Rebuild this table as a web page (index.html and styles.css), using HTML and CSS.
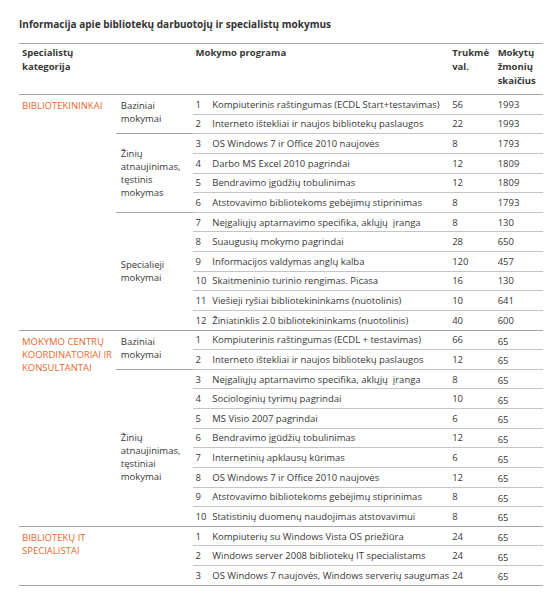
FILE: index.html
```html
<!DOCTYPE html>
<html lang="lt">
<head>
	<meta charset="UTF-8">
	<title>Mokymai</title>
	<link rel="stylesheet" href="styles.css">
</head>
<body>
	<h1 class="title">Informacija apie bibliotekų darbuotojų ir specialistų mokymus</h1>
	<table class="report">
		<colgroup>
			<col class="c-cat">
			<col class="c-type">
			<col class="c-no">
			<col class="c-prog">
			<col class="c-hours">
			<col class="c-people">
		</colgroup>
		<thead>
			<tr>
				<th>Specialistų<br>kategorija</th>
				<th></th>
				<th colspan="2">Mokymo programa</th>
				<th>Trukmė<br>val.</th>
				<th>Mokytų<br>žmonių<br>skaičius</th>
			</tr>
		</thead>
		<tbody class="group">
			<tr>
				<td class="cat" rowspan="12">BIBLIOTEKININKAI</td>
				<td class="type top" rowspan="2">Baziniai<br>mokymai</td>
				<td class="no">1</td><td class="prog">Kompiuterinis raštingumas (ECDL Start+testavimas)</td><td class="num">56</td><td class="num">1993</td>
			</tr>
			<tr>
				<td class="no">2</td><td class="prog">Interneto ištekliai ir naujos bibliotekų paslaugos</td><td class="num">22</td><td class="num">1993</td>
			</tr>
			<tr>
				<td class="type" rowspan="4">Žinių<br>atnaujinimas,<br>tęstinis<br>mokymas</td>
				<td class="no">3</td><td class="prog">OS Windows 7 ir Office 2010 naujovės</td><td class="num">8</td><td class="num">1793</td>
			</tr>
			<tr>
				<td class="no">4</td><td class="prog">Darbo MS Excel 2010 pagrindai</td><td class="num">12</td><td class="num">1809</td>
			</tr>
			<tr>
				<td class="no">5</td><td class="prog">Bendravimo įgūdžių tobulinimas</td><td class="num">12</td><td class="num">1809</td>
			</tr>
			<tr>
				<td class="no">6</td><td class="prog">Atstovavimo bibliotekoms gebėjimų stiprinimas</td><td class="num">8</td><td class="num">1793</td>
			</tr>
			<tr>
				<td class="type" rowspan="6">Specialieji<br>mokymai</td>
				<td class="no">7</td><td class="prog">Neįgaliųjų aptarnavimo specifika, aklųjų &nbsp;įranga</td><td class="num">8</td><td class="num">130</td>
			</tr>
			<tr>
				<td class="no">8</td><td class="prog">Suaugusių mokymo pagrindai</td><td class="num">28</td><td class="num">650</td>
			</tr>
			<tr>
				<td class="no">9</td><td class="prog">Informacijos valdymas anglų kalba</td><td class="num">120</td><td class="num">457</td>
			</tr>
			<tr>
				<td class="no">10</td><td class="prog">Skaitmeninio turinio rengimas. Picasa</td><td class="num">16</td><td class="num">130</td>
			</tr>
			<tr>
				<td class="no">11</td><td class="prog">Viešieji ryšiai bibliotekininkams (nuotolinis)</td><td class="num">10</td><td class="num">641</td>
			</tr>
			<tr>
				<td class="no">12</td><td class="prog">Žiniatinklis 2.0 bibliotekininkams (nuotolinis)</td><td class="num">40</td><td class="num">600</td>
			</tr>
		</tbody>
		<tbody class="group">
			<tr>
				<td class="cat" rowspan="10">MOKYMO CENTRŲ KOORDINATORIAI IR KONSULTANTAI</td>
				<td class="type top" rowspan="2">Baziniai<br>mokymai</td>
				<td class="no">1</td><td class="prog">Kompiuterinis raštingumas (ECDL + testavimas)</td><td class="num">66</td><td class="num low">65</td>
			</tr>
			<tr>
				<td class="no">2</td><td class="prog">Interneto ištekliai ir naujos bibliotekų paslaugos</td><td class="num">12</td><td class="num low">65</td>
			</tr>
			<tr>
				<td class="type lower" rowspan="8">Žinių<br>atnaujinimas,<br>tęstiniai<br>mokymai</td>
				<td class="no">3</td><td class="prog">Neįgaliųjų aptarnavimo specifika, aklųjų &nbsp;įranga</td><td class="num">8</td><td class="num low">65</td>
			</tr>
			<tr>
				<td class="no">4</td><td class="prog">Sociologinių tyrimų pagrindai</td><td class="num">10</td><td class="num low">65</td>
			</tr>
			<tr>
				<td class="no">5</td><td class="prog">MS Visio 2007 pagrindai</td><td class="num">6</td><td class="num low">65</td>
			</tr>
			<tr>
				<td class="no">6</td><td class="prog">Bendravimo įgūdžių tobulinimas</td><td class="num">12</td><td class="num low">65</td>
			</tr>
			<tr>
				<td class="no">7</td><td class="prog">Internetinių apklausų kūrimas</td><td class="num">6</td><td class="num low">65</td>
			</tr>
			<tr>
				<td class="no">8</td><td class="prog">OS Windows 7 ir Office 2010 naujovės</td><td class="num">12</td><td class="num low">65</td>
			</tr>
			<tr>
				<td class="no">9</td><td class="prog">Atstovavimo bibliotekoms gebėjimų stiprinimas</td><td class="num">8</td><td class="num low">65</td>
			</tr>
			<tr>
				<td class="no">10</td><td class="prog">Statistinių duomenų naudojimas atstovavimui</td><td class="num">8</td><td class="num low">65</td>
			</tr>
		</tbody>
		<tbody class="group">
			<tr>
				<td class="cat" rowspan="3">BIBLIOTEKŲ IT SPECIALISTAI</td>
				<td class="type" rowspan="3"></td>
				<td class="no">1</td><td class="prog">Kompiuterių su Windows Vista OS priežiūra</td><td class="num">24</td><td class="num low">65</td>
			</tr>
			<tr>
				<td class="no">2</td><td class="prog">Windows server 2008 bibliotekų IT specialistams</td><td class="num">24</td><td class="num low">65</td>
			</tr>
			<tr>
				<td class="no">3</td><td class="prog">OS Windows 7 naujovės, Windows serverių saugumas</td><td class="num">24</td><td class="num low">65</td>
			</tr>
		</tbody>
	</table>
</body>
</html>
```

FILE: styles.css
```css
*{
	margin: 0;
	padding: 0;
	box-sizing: border-box;
}
body{
	background: #fff;
	color: #383838;
	font-family: "Open Sans", "Noto Sans", sans-serif;
	font-size: 9.5px;
	padding: 17px 0 0 19px;
}
.title{
	font-size: 10px;
	font-weight: bold;
	line-height: 14px;
	color: #333;
	margin-bottom: 12px;
}
.report{
	width: 524px;
	border-collapse: collapse;
	border-top: 1px solid #a6a6a6;
}
.c-cat{ width: 98px; }
.c-type{ width: 78px; }
.c-no{ width: 18px; }
.c-prog{ width: 235px; }
.c-hours{ width: 46px; }
.c-people{ width: 49px; }
.report th{
	text-align: left;
	vertical-align: top;
	font-weight: bold;
	line-height: 14px;
	padding: 2px 0 0 3px;
	height: 51px;
	border-bottom: 1px solid #a6a6a6;
}
.report td{
	height: 19.64px;
	line-height: 13px;
	padding: 0;
	vertical-align: middle;
	white-space: nowrap;
}
.report td.cat{
	vertical-align: top;
	padding: 4px 0 0 3px;
	color: #e8672c;
	white-space: normal;
	border-bottom: 1px solid #a6a6a6;
}
.report td.type{
	padding-left: 5px;
	border-bottom: 1px solid #a6a6a6;
}
.report td.type.top{
	vertical-align: top;
	padding-top: 4px;
}
.report td.type.lower{
	padding-top: 18px;
}
.report td.no{
	padding-left: 3px;
}
.report td.prog{
	padding-left: 2px;
}
.report td.num{
	padding-left: 3px;
}
.report td.num.low{
	padding-top: 3px;
}
.report td.no,
.report td.prog,
.report td.num{
	border-bottom: 1px solid #c4c4c4;
}
.group tr:last-child td{
	border-bottom-color: #a6a6a6;
}
```
